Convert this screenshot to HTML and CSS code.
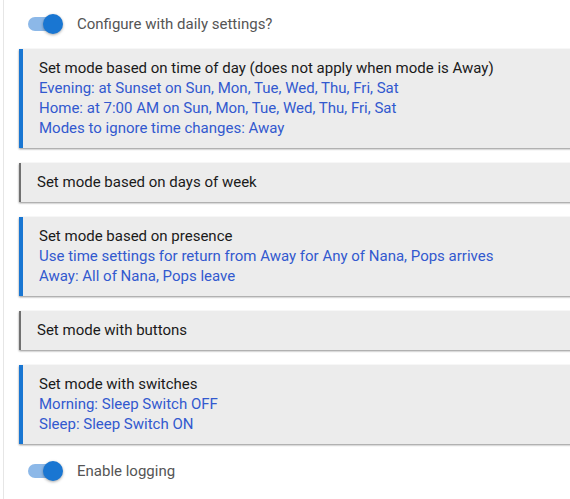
FILE: index.html
```html
<!DOCTYPE html>
<html lang="en">
<head>
    <meta charset="UTF-8">
    <meta name="viewport" content="width=device-width, initial-scale=1.0">
    <title>Mode Manager</title>
    <link rel="stylesheet" href="styles.css">
</head>
<body>
    <div class="page">
        <div class="toggle-row">
            <span class="toggle"><span class="knob"></span></span>
            <span class="toggle-label">Configure with daily settings?</span>
        </div>

        <div class="card active">
            <div class="title">Set mode based on time of day (does not apply when mode is Away)</div>
            <div class="info">Evening: at Sunset on Sun, Mon, Tue, Wed, Thu, Fri, Sat</div>
            <div class="info">Home: at 7:00 AM on Sun, Mon, Tue, Wed, Thu, Fri, Sat</div>
            <div class="info">Modes to ignore time changes: Away</div>
        </div>

        <div class="card">
            <div class="title">Set mode based on days of week</div>
        </div>

        <div class="card active">
            <div class="title">Set mode based on presence</div>
            <div class="info">Use time settings for return from Away for Any of Nana, Pops arrives</div>
            <div class="info">Away: All of Nana, Pops leave</div>
        </div>

        <div class="card">
            <div class="title">Set mode with buttons</div>
        </div>

        <div class="card active">
            <div class="title">Set mode with switches</div>
            <div class="info">Morning: Sleep Switch OFF</div>
            <div class="info">Sleep: Sleep Switch ON</div>
        </div>

        <div class="toggle-row bottom">
            <span class="toggle"><span class="knob"></span></span>
            <span class="toggle-label">Enable logging</span>
        </div>
    </div>
</body>
</html>
```
FILE: styles.css
```css
* {
    margin: 0;
    padding: 0;
    box-sizing: border-box;
}

body {
    font-family: Roboto, "Liberation Sans", Arial, sans-serif;
    font-size: 15px;
    line-height: 20px;
    color: #1a1a1a;
    background: #fff;
    overflow: hidden;
}

.page {
    margin-left: 3px;
    border-left: 1px solid #e6e6e6;
    min-height: 499px;
    padding: 0 0 0 15px;
    margin-right: -20px;
}

/* interruptores */
.toggle-row {
    display: flex;
    align-items: center;
    height: 48px;
    padding-left: 9px;
}

.toggle-row.bottom {
    height: 24px;
}

.toggle {
    position: relative;
    width: 34px;
    height: 14px;
    border-radius: 7px;
    background: #8cb8e8;
}

.knob {
    position: absolute;
    top: -3px;
    right: -1px;
    width: 20px;
    height: 20px;
    border-radius: 50%;
    background: #1976d2;
    box-shadow: 0 1px 3px rgba(0, 0, 0, 0.35);
}

.toggle-label {
    margin-left: 15px;
    color: #555;
}

/* cartoes */
.card {
    background: #ececec;
    border-left: 2px solid #707070;
    padding: 9px 16px 10px 16px;
    margin: 1px 0 15px 0;
    box-shadow: 0 1px 2px rgba(0, 0, 0, 0.45);
}

.card.active {
    border-left: 4px solid #1976d2;
}

.info {
    color: #3259cf;
}
```
